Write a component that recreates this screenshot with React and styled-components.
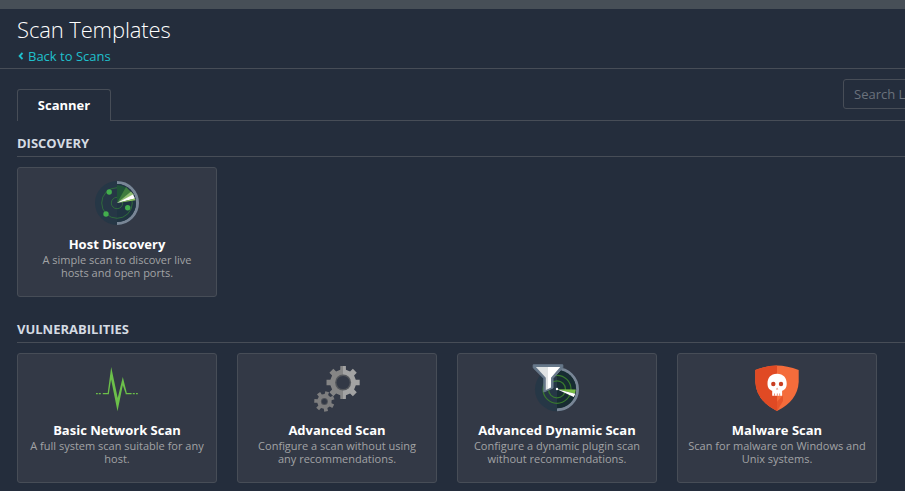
import React from "react";
import styled, { createGlobalStyle } from "styled-components";

const GlobalStyle = createGlobalStyle`
  html, body { margin: 0; background: #242d3c; }
  body { overflow: hidden; font-family: "Open Sans", "Noto Sans", sans-serif; font-size: 13px; color: #fff; }
  * { box-sizing: border-box; }
`;

const Page = styled.div`
  width: 100%;
  height: 491px;
  overflow: hidden;
  background: #242d3c;
`;
const TopBar = styled.div`
  height: 9px;
  background: #474f57;
`;
const Header = styled.header`
  height: 60px;
  padding: 5px 0 0 17px;
  border-bottom: 1px solid #474d57;
`;
const Title = styled.h1`
  margin: 0;
  font-size: 22px;
  font-weight: 300;
  letter-spacing: -0.12px;
  line-height: 31px;
`;
const BackLink = styled.a`
  display: flex;
  align-items: center;
  width: max-content;
  gap: 4px;
  padding-left: 1px;
  margin-top: 2px;
  line-height: 18px;
  color: #1fc0cd;
  text-decoration: none;
`;
const TabBar = styled.nav`
  display: flex;
  align-items: flex-start;
  height: 52px;
  padding: 10px 0 0 17px;
`;
const Tab = styled.div`
  flex: 0 0 94px;
  height: 32px;
  margin-top: 10px;
  border: 1px solid #474d57;
  border-bottom: 0;
  border-radius: 3px 3px 0 0;
  font-weight: 700;
  line-height: 31px;
  text-align: center;
`;
const TabRule = styled.div`
  flex: 1;
  min-width: 0;
  height: 42px;
  border-bottom: 1px solid #474d57;
`;
const Search = styled.input`
  display: block;
  width: 200px;
  height: 30px;
  margin-left: 732px;
  padding: 0 10px;
  border: 1px solid #474d57;
  border-radius: 3px;
  background: transparent;
  font: inherit;
  color: #fff;
  &::placeholder { color: #6b727c; opacity: 1; }
`;
const Section = styled.section`
  height: 186px;
  padding: 13px 0 0 17px;
`;
const SectionTitle = styled.h2`
  height: 23px;
  margin: 0 0 10px;
  border-bottom: 1px solid #474d57;
  font-size: 13px;
  font-weight: 700;
  line-height: 19px;
  color: #d5dbe3;
`;
const Cards = styled.div`
  display: flex;
  gap: 20px;
`;
const Card = styled.article`
  display: flex;
  flex-direction: column;
  align-items: center;
  flex: 0 0 200px;
  height: 130px;
  padding: 13px 10px 0;
  border: 1px solid #474d57;
  border-radius: 3px;
  background: #333946;
  text-align: center;
`;
const CardTitle = styled.h3`
  margin: 10px 0 0;
  font-size: 13px;
  font-weight: 700;
  line-height: 18px;
`;
const CardText = styled.p`
  margin: 0;
  font-size: 11px;
  line-height: 13px;
  color: #a2a3a5;
`;
const Icon = styled.svg`
  display: block;
  flex: none;
  width: 44px;
  height: 44px;
  overflow: visible;
`;

function gear(cx, cy, root, outer, teeth, turn) {
  const step = (Math.PI * 2) / teeth;
  const points = [];
  for (let i = 0; i < teeth; i += 1) {
    const a = i * step + turn;
    [[-0.28, root], [-0.21, outer], [0.21, outer], [0.28, root]].forEach(([t, r]) => {
      points.push(`${(cx + r * Math.sin(a + t * step)).toFixed(2)} ${(cy - r * Math.cos(a + t * step)).toFixed(2)}`);
    });
  }
  return `M${points.join("L")}Z`;
}

const RadarIcon = () => (
  <Icon viewBox="0 0 44 44" fill="none">
    <circle cx="22" cy="22" r="22" fill="#263746" />
    <path d="M22 1.5A20.5 20.5 0 0 1 22 42.5" stroke="#798696" strokeWidth="3" />
    <path d="M22 3A19 19 0 0 1 22 41Z" fill="#203442" />
    <circle cx="22" cy="22" r="15.3" stroke="#2f6b3c" />
    <circle cx="22" cy="22" r="5.7" stroke="#2f6b3c" />
    <path d="M22 22V4A18 18 0 0 1 32 7Z" fill="#205338" />
    <path d="M22 22L31 6L36 11Z" fill="#3e7c3e" />
    <path d="M22 22L36 10.5L39 14Z" fill="#8fbd72" />
    <path d="M22 22L38 13.5L40 17.5Z" fill="#fff" />
    <path d="M22 22L40 17.5L40.5 19.3Z" fill="#8fc65c" />
    <circle cx="14.2" cy="11" r="2.7" fill="#43ad4d" />
    <circle cx="11" cy="33" r="2.7" fill="#43ad4d" />
    <circle cx="32.7" cy="26.7" r="2.7" fill="#43ad4d" />
  </Icon>
);

const PulseIcon = () => (
  <Icon viewBox="0 0 44 44" fill="none">
    <path d="M1 26.6h1.8M3.8 26.6h2M7.8 26.6h6M30.6 26.6h6M37.8 26.6h2M41 26.6h1.8" stroke="#6cc04a" strokeWidth="1.3" />
    <path d="M12.7 26L16.2 0L22.7 31L27.8 10L31.8 26H30.5L27.8 18.2L22.5 44.2L16.1 12.5L13.8 27Z" fill="#6cc04a" />
  </Icon>
);

const GearsIcon = () => (
  <Icon viewBox="0 0 44 44">
    <defs>
      <linearGradient id="gear-split" gradientUnits="userSpaceOnUse" x1="12" y1="0" x2="45" y2="0">
        <stop offset="0.49" stopColor="#858585" />
        <stop offset="0.49" stopColor="#a3a3a3" />
      </linearGradient>
    </defs>
    <path d={gear(28.1, 15.5, 13, 16.8, 8, 0)} fill="url(#gear-split)" />
    <circle cx="28.1" cy="15.5" r="8" fill="#54575c" />
    <circle cx="28.1" cy="15.5" r="6.6" fill="#333946" />
    <path d={gear(9.4, 34.4, 7.3, 10.3, 7, 0.28)} fill="#7d7d7e" />
    <circle cx="9.4" cy="34.4" r="3.5" fill="#4e5158" />
    <circle cx="9.4" cy="34.4" r="2.5" fill="#333946" />
  </Icon>
);

const FilterRadarIcon = () => (
  <Icon viewBox="0 0 44 44" fill="none">
    <circle cx="22" cy="22.3" r="22" fill="#263746" />
    <path d="M22 1.8A20.5 20.5 0 0 1 22 42.8" stroke="#798696" strokeWidth="3" />
    <path d="M22 3A19 19 0 0 1 22 41.3Z" fill="#172c32" />
    <circle cx="22" cy="22.3" r="14" stroke="#397a2e" strokeWidth="1.2" />
    <circle cx="22" cy="22.3" r="8.5" stroke="#397a2e" strokeWidth="1.2" />
    <path d="M22 22.3L40.8 22.5L40 26.8Z" fill="#78bd43" />
    <path d="M22 22.3L40.3 26.8L38.8 30Z" fill="#fff" />
    <circle cx="22" cy="22" r="1.2" fill="#fff" />
    <path d="M-1.8-2.2H27.8V.8L18 11.4V21L8.8 25V11.4L-1.8 .8Z" fill="#67788a" stroke="#67788a" strokeLinejoin="round" />
    <path d="M.9 0H13V22L10.8 23V10.8Z" fill="#e0e3e4" />
    <path d="M13 0H25.2L16 10.8V20.6L13 22Z" fill="#fff" />
  </Icon>
);

const SkullShieldIcon = () => (
  <Icon viewBox="0 0 44 44">
    <path d="M.3 3.1Q12-1.5 22-1.5Q32-1.5 43.7 3.1V15Q42.5 34 22 44Q1.5 34 .3 15Z" fill="#f46c3b" />
    <path d="M22-1.5Q12-1.5 .3 3.1V15Q1.5 34 22 44Z" fill="#e04a24" />
    <path d="M22 34.5L28 28.5V34L22 44Z" fill="#e04a24" opacity="0.65" />
    <path d="M22 6.7C15.5 6.7 12.5 11 12.5 16.4C12.5 21 14.5 22.5 17.2 23.8V28.7H27.1V23.8C29.8 22.5 31.7 21 31.7 16.4C31.7 11 28.5 6.7 22 6.7Z" fill="#fff" />
    <circle cx="18.3" cy="17" r="2.2" fill="#c83e21" />
    <circle cx="26" cy="17" r="2.2" fill="#c83e21" />
    <path d="M22.1 20.5L20.9 22.6H23.3Z" fill="#e98b72" />
    <path d="M19.4 26.6h.6v2.1h-.6zM21.9 26.6h.6v2.1h-.6zM24.5 26.6h.6v2.1h-.6z" fill="#e04a24" />
  </Icon>
);

const discovery = [
  { icon: RadarIcon, title: "Host Discovery", lines: ["A simple scan to discover live", "hosts and open ports."] },
];
const vulnerabilities = [
  { icon: PulseIcon, title: "Basic Network Scan", lines: ["A full system scan suitable for any", "host."] },
  { icon: GearsIcon, title: "Advanced Scan", lines: ["Configure a scan without using", "any recommendations."] },
  { icon: FilterRadarIcon, title: "Advanced Dynamic Scan", lines: ["Configure a dynamic plugin scan", "without recommendations."] },
  { icon: SkullShieldIcon, title: "Malware Scan", lines: ["Scan for malware on Windows and", "Unix systems."] },
];

const TemplateSection = ({ title, items }) => (
  <Section>
    <SectionTitle>{title}</SectionTitle>
    <Cards>
      {items.map(({ icon: Drawing, title: name, lines }) => (
        <Card key={name}>
          <Drawing />
          <CardTitle>{name}</CardTitle>
          <CardText>{lines[0]}<br />{lines[1]}</CardText>
        </Card>
      ))}
    </Cards>
  </Section>
);

export default function App() {
  return (
    <Page>
      <GlobalStyle />
      <TopBar />
      <Header>
        <Title>Scan Templates</Title>
        <BackLink>
          <svg width="6" height="8" viewBox="0 0 6 8" fill="none" stroke="currentColor" strokeWidth="1.8">
            <path d="M4.5 1L1.6 4L4.5 7" />
          </svg>
          Back to Scans
        </BackLink>
      </Header>
      <TabBar>
        <Tab>Scanner</Tab>
        <TabRule>
          <Search placeholder="Search Library" />
        </TabRule>
      </TabBar>
      <TemplateSection title="DISCOVERY" items={discovery} />
      <TemplateSection title="VULNERABILITIES" items={vulnerabilities} />
    </Page>
  );
}
